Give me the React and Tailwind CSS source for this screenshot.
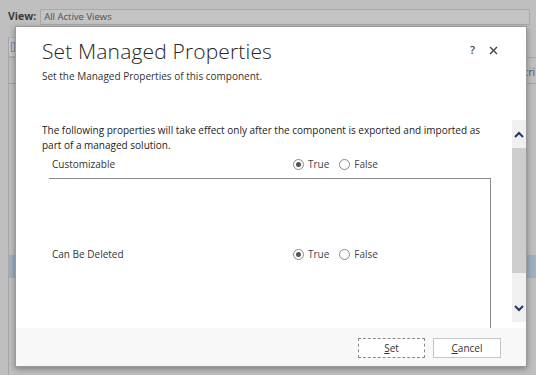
import React, { useState } from "react";

const font = { fontFamily: '"Open Sans", "Noto Sans", sans-serif' };

function Radio({ checked, label, onClick }) {
  return (
    <button type="button" onClick={onClick} className="flex items-center gap-[4px] text-[10px] text-[#444]">
      <span className="w-[11px] h-[11px] rounded-full border border-[#8a8a8a] bg-white flex items-center justify-center">
        {checked && <span className="w-[5px] h-[5px] rounded-full bg-[#555]" />}
      </span>
      <span>{label}</span>
    </button>
  );
}

function PropRow({ label, value, setValue, labelClass }) {
  return (
    <div className="flex items-center h-[22px]">
      <div className={"text-[10px] text-[#333] " + labelClass}>{label}</div>
      <div className="flex items-center gap-[10px]">
        <Radio checked={value} label="True" onClick={() => setValue(true)} />
        <Radio checked={!value} label="False" onClick={() => setValue(false)} />
      </div>
    </div>
  );
}

function Chevron({ up }) {
  return (
    <svg width="10" height="7" viewBox="0 0 10 7">
      <path d={up ? "M1 6 L5 2 L9 6" : "M1 1 L5 5 L9 1"} fill="none" stroke="#1f3b63" strokeWidth="2" />
    </svg>
  );
}

export default function App() {
  const [customizable, setCustomizable] = useState(true);
  const [canDelete, setCanDelete] = useState(true);

  return (
    <div className="relative w-[536px] h-[375px] overflow-hidden bg-[#bfbfbf]" style={font}>
      {/* page behind the overlay */}
      <div className="flex items-center h-[34px] pl-[8px] pr-[6px] gap-[4px]">
        <span className="text-[10.5px] font-bold text-[#3a3a3a]">View:</span>
        <div className="flex-1 h-[16px] bg-[#c4c4c4] border border-[#a9a9a9] flex items-center pl-[3px] text-[9.5px] text-[#505050]">
          All Active Views
        </div>
      </div>
      <div className="ml-[8px] border-l border-[#a8a8a8] h-[341px]">
        <div className="h-[20px] mt-[3px] w-[8px] bg-[#c6c6c6] border-y border-[#b0b0b0] flex items-center">
          <span className="ml-[2px] w-[4px] h-[10px] border border-[#8193a6]" />
        </div>
        <div className="h-[26px] border-t border-[#a8a8a8] flex justify-end items-center pt-[3px]">
          <span className="text-[10px] text-[#505050] pr-[1px]">cri</span>
        </div>
        <div className="border-t border-[#a3a3a3]" />
        <div className="mt-[171px] h-[23px] bg-[#9fb0bf]" />
      </div>

      {/* dialog */}
      <div className="absolute left-[15px] top-[26px] w-[512px] h-[341px] bg-white border border-[#9a9a9a] shadow-[0_2px_6px_rgba(0,0,0,0.35)] flex flex-col">
        <div className="relative h-[93px] pl-[26px] pt-[10px]">
          <h1 className="text-[21px] font-light tracking-[0.15px] text-[#262626] leading-[28px]">Set Managed Properties</h1>
          <p className="mt-[4px] text-[10px] text-[#333]">Set the Managed Properties of this component.</p>
          <div className="absolute top-[15px] right-[28px] flex items-center gap-[14px] text-[#444]">
            <span className="text-[11px] font-semibold">?</span>
            <svg width="9" height="9" viewBox="0 0 9 9">
              <path d="M1 1 L8 8 M8 1 L1 8" stroke="#444" strokeWidth="1.4" />
            </svg>
          </div>
        </div>

        <div className="flex flex-1 min-h-0">
          <div className="flex-1 overflow-hidden pt-[3px]">
            <p className="pl-[26px] pr-[20px] text-[10px] leading-[15px] text-[#222]">
              The following properties will take effect only after the component is exported and imported as part of a managed solution.
            </p>
            <div className="pb-[3px]">
              <PropRow label="Customizable" value={customizable} setValue={setCustomizable} labelClass="w-[277px] pl-[36px]" />
            </div>
            <div className="ml-[33px] mr-[21px] h-[160px] border-t border-r border-[#8c8c8c] pt-[64px]">
              <PropRow label="Can Be Deleted" value={canDelete} setValue={setCanDelete} labelClass="w-[244px] pl-[3px]" />
            </div>
          </div>
          <div className="w-[14px] mb-[6px] flex flex-col bg-[#f0f0f0]">
            <div className="h-[28px] flex items-center justify-center"><Chevron up /></div>
            <div className="h-[125px] bg-[#cdcdcd]" />
            <div className="flex-1 flex items-end justify-center pb-[10px]"><Chevron /></div>
          </div>
        </div>

        <div className="h-[38px] bg-[#f8f8f8] flex items-center justify-end gap-[8px] pr-[25px] pt-[2px]">
          <button className="w-[67px] h-[20px] bg-white border border-dashed border-[#8a8a8a] text-[10px] text-[#333]">
            <span className="underline">S</span>et
          </button>
          <button className="w-[68px] h-[20px] bg-white border border-[#c6c6c6] text-[10px] text-[#333]">
            <span className="underline">C</span>ancel
          </button>
        </div>
      </div>
    </div>
  );
}
